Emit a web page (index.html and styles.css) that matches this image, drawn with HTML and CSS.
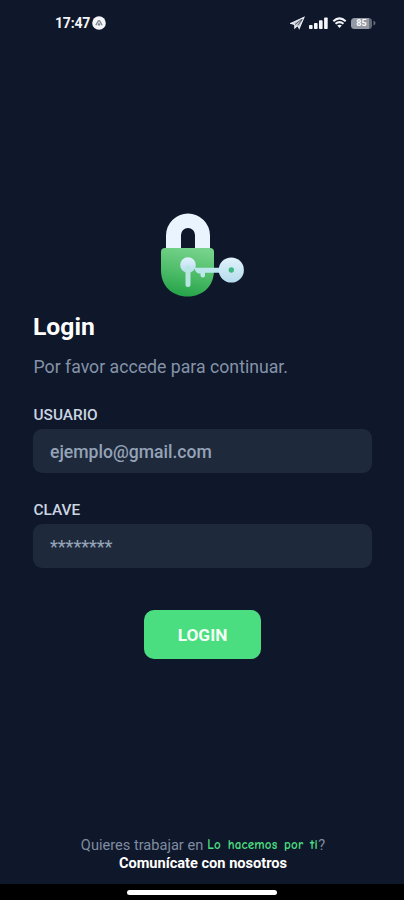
FILE: index.html
```html
<!DOCTYPE html>
<html lang="es">
<head>
<meta charset="utf-8">
<title>Login</title>
<link rel="stylesheet" href="styles.css">
</head>
<body>
<header class="status">
  <div class="clock">
    <span class="time">17:47</span>
    <svg width="14" height="14" viewBox="0 0 14 14"><circle cx="7" cy="7" r="6.8" fill="#f3f5f8"/><path d="M3.8 9.3L6 5.4Q7 4 8 5.4L10.2 9.3M6 9.4L7 7.6L8 9.4" fill="none" stroke="#7b828e" stroke-width="1.2"/></svg>
  </div>
  <div class="signals">
    <svg width="15" height="14" viewBox="0 0 15 14"><path d="M.7 7.4L14 1.2L9.2 12.4L7.7 9.4L4.8 12V8.5Z" fill="#c6cbd3" stroke="#eceff3" stroke-width="1.1"/><path d="M5 8.5L11.8 3.3M7.7 9.4L12.2 3.5" fill="none" stroke="#172033" stroke-width=".7"/></svg>
    <svg width="19" height="13" viewBox="0 0 19 13"><g fill="#f5f6f8"><rect x="0" y="8" width="3.6" height="4" rx=".8"/><rect x="5" y="6" width="3.6" height="6" rx=".8"/><rect x="10" y="3.2" width="3.6" height="8.8" rx=".8"/><rect x="15.1" y=".5" width="3.6" height="11.5" rx=".8"/></g></svg>
    <svg width="15" height="12" viewBox="0 0 14 12"><path d="M.8 4.2Q7-1.5 13.2 4.2M3 6.8Q7 3.4 11 6.8" fill="none" stroke="#f2f4f7" stroke-width="2"/><path d="M4.7 8.6Q7 6.8 9.3 8.6L7 11Z" fill="#f2f4f7"/></svg>
    <div class="battery"><span class="level">85</span><svg width="3" height="6" viewBox="0 0 3 6"><path d="M.5 .5Q2.5 1.5 2.5 3T.5 5.5Z" fill="#687080"/></svg></div>
  </div>
</header>
<main class="login">
  <svg class="logo" width="86" height="86" viewBox="0 0 86 86">
    <defs>
      <linearGradient id="body" x1=".6" y1="0" x2=".4" y2="1"><stop offset="0" stop-color="#76d38b"/><stop offset=".5" stop-color="#50bd6a"/><stop offset="1" stop-color="#25a349"/></linearGradient>
      <linearGradient id="steel" x1="0" y1="0" x2="0" y2="1"><stop offset="0" stop-color="#e1f2fc"/><stop offset="1" stop-color="#b5dced"/></linearGradient>
    </defs>
    <path d="M7 39V23.5A22 22 0 0 1 51 23.5V39H36V23A7 7 0 0 0 22 23V39Z" fill="#eaf4ff"/>
    <path d="M6 36H51Q55 36 55 40V58C55 74 44 84.5 28.5 84.5S2 74 2 58V40Q2 36 6 36Z" fill="url(#body)"/>
    <circle cx="29" cy="53" r="7.8" fill="url(#steel)"/><path d="M29 56V72.5" stroke="#b9e5e4" stroke-width="5" stroke-linecap="round"/>
    <path d="M36 55.5Q38 56 39 55.7H63V60.7H46V63.5Q46 65.5 43.8 65.5T41.5 63.5V61.5H39.5Q37 61 36 58Z" fill="#bce7ec"/>
    <circle cx="72.3" cy="58" r="12.6" fill="url(#steel)"/><circle cx="72.3" cy="58" r="2.7" fill="#43b982"/>
  </svg>
  <h1 class="title">Login</h1>
  <p class="intro">Por favor accede para continuar.</p>
  <label class="label" for="user">USUARIO</label>
  <input class="field" id="user" type="text" placeholder="ejemplo@gmail.com">
  <label class="label" for="password">CLAVE</label>
  <input class="field stars" id="password" type="password" placeholder="********">
  <button class="submit" type="button">LOGIN</button>
</main>
<footer class="footer">
  <p class="work"><span class="ask">Quieres trabajar en</span><span class="brand">Lo hacemos por ti</span><span>?</span></p>
  <p class="contact">Comunícate con nosotros</p>
</footer>
<div class="home"><span class="indicator"></span></div>
</body>
</html>
```
FILE: styles.css
```css
* { box-sizing: border-box; }
body {
  margin: 0;
  height: 900px;
  display: flex;
  flex-direction: column;
  overflow: hidden;
  background: #0f172a;
  font-family: Roboto, "Liberation Sans", sans-serif;
  color: #fff;
}
svg { display: block; flex: none; }
.status {
  height: 46px;
  flex: none;
  display: flex;
  justify-content: space-between;
  padding: 0 28px 0 55px;
}
.clock, .signals { display: flex; align-items: center; height: 46px; }
.time { font-size: 14px; font-weight: 700; letter-spacing: -.2px; margin-right: 2px; color: #f2f4f7; }
.signals { gap: 4px; }
.battery { display: flex; align-items: center; gap: 1px; }
.level {
  width: 21px;
  height: 11px;
  border-radius: 3.5px;
  background: linear-gradient(90deg, #9499a3 85%, #626a78 85%);
  font-size: 9px;
  line-height: 11px;
  font-weight: 700;
  text-align: center;
}
.login { flex: 1; display: flex; flex-direction: column; padding: 166px 32px 0 33px; }
.logo { margin-left: 126px; }
.title { margin: 15px 0 0; font-size: 24.7px; line-height: 28px; font-weight: 700; }
.intro { margin: 15px 0 0; padding-left: .5px; font-size: 17.7px; line-height: 22px; color: #8593a8; }
.label { margin-top: 29px; padding-left: .5px; font-size: 15.4px; line-height: 17px; font-weight: 500; color: #cbd5e1; }
.field {
  width: 100%;
  height: 44px;
  margin-top: 5px;
  border: 0;
  border-radius: 9px;
  padding: 2px 17px 0;
  background: #1e293b;
  color: #94a3b8;
  font: 500 17.6px Roboto, sans-serif;
}
.field::placeholder { color: #94a3b8; opacity: 1; }
.submit {
  align-self: center;
  width: 117px;
  height: 49px;
  margin-top: 42px;
  padding: 0;
  border: 0;
  border-radius: 10px;
  background: #4ade80;
  color: #f3fff5;
  font: 700 17.3px Roboto, sans-serif;
}
.footer { flex: none; height: 48px; text-align: center; font-size: 14.6px; color: #94a3b8; }
.footer p { margin: 0; line-height: 18px; }
.footer .work { display: flex; justify-content: center; padding-left: 2px; color: #7f8ca1; }
.brand {
  width: 111px;
  margin-left: 4px;
  font-family: "Comic Neue", "Noto Sans", sans-serif;
  font-size: 13px;
  font-weight: 700;
  letter-spacing: .15px;
  word-spacing: 2px;
  text-align: left;
  white-space: nowrap;
  color: #4ade80;
}
.footer .contact { padding-left: 2px; color: #fff; font-size: 14.6px; font-weight: 700; }
.home { flex: none; height: 16px; background: #000; display: flex; justify-content: center; align-items: center; }
.indicator { width: 150px; height: 5px; border-radius: 3px; background: #fff; }
```
